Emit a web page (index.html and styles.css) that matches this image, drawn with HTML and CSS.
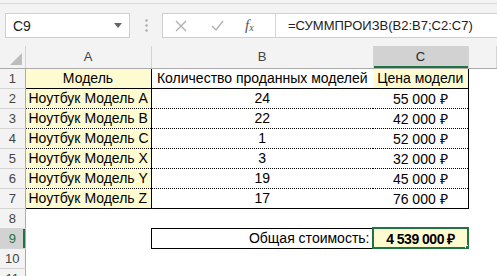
FILE: index.html
```html
<!DOCTYPE html>
<html lang="ru">
  <head>
    <meta charset="UTF-8" />
    <meta name="viewport" content="width=device-width, initial-scale=1.0" />
    <title>Общая стоимость</title>
    <link rel="stylesheet" href="styles.css">
  </head>
  <body>
    <div class="topbar">
      <div class="namebox">
        <span>C9</span>
        <svg class="caret" width="8" height="5" viewBox="0 0 8 5"><path d="M0 0h8L4 5z" fill="#666"/></svg>
      </div>
      <div class="grip">
        <svg width="3" height="13" viewBox="0 0 3 13"><circle cx="1.5" cy="1.5" r="1.2" fill="#aaa"/><circle cx="1.5" cy="6.5" r="1.2" fill="#aaa"/><circle cx="1.5" cy="11.5" r="1.2" fill="#aaa"/></svg>
      </div>
      <div class="formula">
        <div class="fbtns">
          <svg class="fbtn" width="12" height="12" viewBox="0 0 12 12"><path d="M1 1l10 10M11 1L1 11" stroke="#b0b0b0" stroke-width="1.3" fill="none"/></svg>
          <svg class="fbtn" width="13" height="11" viewBox="0 0 13 11"><path d="M1 6l4 4 7-9" stroke="#b0b0b0" stroke-width="1.3" fill="none"/></svg>
          <span class="fx">f<sub>x</sub></span>
        </div>
        <div class="ftext">=СУММПРОИЗВ(B2:B7;C2:C7)</div>
      </div>
    </div>

    <table class="sheet">
      <colgroup>
        <col class="c-head" />
        <col class="c-a" />
        <col class="c-b" />
        <col class="c-c" />
        <col />
      </colgroup>
      <thead>
        <tr>
          <th class="corner"><svg width="12" height="12" viewBox="0 0 12 12"><path d="M12 0v12H0z" fill="#bdbdbd"/></svg></th>
          <th>A</th>
          <th>B</th>
          <th class="sel-col">C</th>
          <th></th>
        </tr>
      </thead>
      <tbody>
        <tr class="top-row">
          <th>1</th>
          <td class="yellow center">Модель</td>
          <td class="center">Количество проданных моделей</td>
          <td class="yellow center last">Цена модели</td>
          <td></td>
        </tr>
        <tr>
          <th>2</th>
          <td class="yellow">Ноутбук Модель A</td>
          <td class="center">24</td>
          <td class="center last">55 000 ₽</td>
          <td></td>
        </tr>
        <tr>
          <th>3</th>
          <td class="yellow">Ноутбук Модель B</td>
          <td class="center">22</td>
          <td class="center last">42 000 ₽</td>
          <td></td>
        </tr>
        <tr>
          <th>4</th>
          <td class="yellow">Ноутбук Модель C</td>
          <td class="center">1</td>
          <td class="center last">52 000 ₽</td>
          <td></td>
        </tr>
        <tr>
          <th>5</th>
          <td class="yellow">Ноутбук Модель X</td>
          <td class="center">3</td>
          <td class="center last">32 000 ₽</td>
          <td></td>
        </tr>
        <tr>
          <th>6</th>
          <td class="yellow">Ноутбук Модель Y</td>
          <td class="center">19</td>
          <td class="center last">45 000 ₽</td>
          <td></td>
        </tr>
        <tr class="bottom-row">
          <th>7</th>
          <td class="yellow">Ноутбук Модель Z</td>
          <td class="center">17</td>
          <td class="center last">76 000 ₽</td>
          <td></td>
        </tr>
        <tr class="blank">
          <th>8</th>
          <td></td>
          <td></td>
          <td></td>
          <td></td>
        </tr>
        <tr class="blank">
          <th class="sel-row">9</th>
          <td></td>
          <td class="total-label">Общая стоимость:</td>
          <td class="yellow center total">4 539 000 ₽</td>
          <td></td>
        </tr>
        <tr class="blank">
          <th>10</th>
          <td></td>
          <td></td>
          <td></td>
          <td></td>
        </tr>
        <tr class="blank">
          <th>11</th>
          <td></td>
          <td></td>
          <td></td>
          <td></td>
        </tr>
      </tbody>
    </table>
  </body>
</html>
```

FILE: styles.css
```css
body {
  margin: 0;
  font-family: "Liberation Sans", Arial, sans-serif;
  font-size: 14px;
  color: #000;
  background-color: #fff;
  overflow: hidden;
}

/* name box + formula bar */
.topbar {
  height: 46px;
  box-sizing: border-box;
  padding-top: 13px;
  display: flex;
  align-items: flex-start;
  background: linear-gradient(#f3f3f3 0 3px, #dcdcdc 3px 4px, #f3f3f3 4px);
}

.namebox {
  margin-left: 5px;
  width: 125px;
  height: 25px;
  box-sizing: border-box;
  padding: 0 7px 0 7px;
  display: flex;
  align-items: center;
  justify-content: space-between;
  background-color: #fff;
  border: 1px solid #cfcfcf;
  font-size: 14px;
  color: #222;
}

.grip {
  width: 32px;
  height: 25px;
  display: flex;
  align-items: center;
  justify-content: center;
}

.formula {
  flex: 1;
  height: 25px;
  box-sizing: border-box;
  display: flex;
  background-color: #fff;
  border: 1px solid #cfcfcf;
  border-right: none;
}

.fbtns {
  width: 112px;
  display: flex;
  align-items: center;
  border-right: 1px solid #d6d6d6;
}

.fbtn {
  margin-left: 12px;
}

.fbtns .fbtn + .fbtn {
  margin-left: 24px;
}

.fx {
  margin-left: 21px;
  font-family: "Liberation Serif", serif;
  font-style: italic;
  font-size: 15px;
  color: #555;
}

.fx sub {
  font-size: 10px;
  vertical-align: -1px;
}

.ftext {
  padding-left: 12px;
  line-height: 23px;
  font-size: 13px;
  color: #222;
  white-space: nowrap;
}

/* grid */
.sheet {
  width: 497px;
  table-layout: fixed;
  border-collapse: collapse;
}

.c-head {
  width: 25px;
}
.c-a {
  width: 126px;
}
.c-b {
  width: 222px;
}
.c-c {
  width: 95px;
}

.sheet tr {
  height: 20px;
}

.sheet thead tr {
  height: 22px;
}

.sheet th {
  padding: 0;
  font-size: 13px;
  font-weight: normal;
  color: #444;
  background-color: #f3f3f3;
  border-right: 1px solid #d4d4d4;
  border-bottom: 1px solid #d4d4d4;
  text-align: center;
}

.sheet thead th {
  border-bottom: 1px solid #ababab;
}

.sheet tbody th {
  border-right: 1px solid #ababab;
}

.sheet .corner {
  text-align: right;
  vertical-align: bottom;
}

.corner svg {
  display: block;
  margin: 0 3px 3px auto;
}

.sheet .sel-col {
  background-color: #d2d2d2;
  color: #262626;
  box-shadow: inset 0 -2px 0 #217346;
}

.sheet .sel-row {
  background-color: #d2d2d2;
  color: #217346;
  box-shadow: inset -2px 0 0 #217346;
}

.sheet td {
  padding: 0 3px;
  white-space: nowrap;
  overflow: hidden;
  border-bottom: 1px dotted #000;
}

.sheet td:nth-child(2),
.sheet td.last {
  border-right: 1px solid #000;
}

.top-row td {
  border-top: 1px solid #000;
  border-bottom: 1px solid #000;
}

.bottom-row td {
  border-bottom: 1px solid #000;
}

/* empty area: no gridlines */
.sheet tr td:last-child,
.sheet tr.blank td {
  border-bottom: none;
  border-right: none;
}

.yellow {
  background-color: #fffbd0;
}

.center {
  text-align: center;
}

.sheet tr.blank .total-label {
  text-align: right;
  border: 1px solid #000;
}

.sheet tr.blank .total {
  position: relative;
  font-weight: bold;
  letter-spacing: -0.5px;
  border: 1px solid #000;
  outline: 2px solid #217346;
  outline-offset: -1px;
}

/* fill handle */
.total::after {
  content: "";
  position: absolute;
  right: -4px;
  bottom: -4px;
  width: 5px;
  height: 5px;
  background-color: #217346;
  border: 1px solid #fff;
}
```
